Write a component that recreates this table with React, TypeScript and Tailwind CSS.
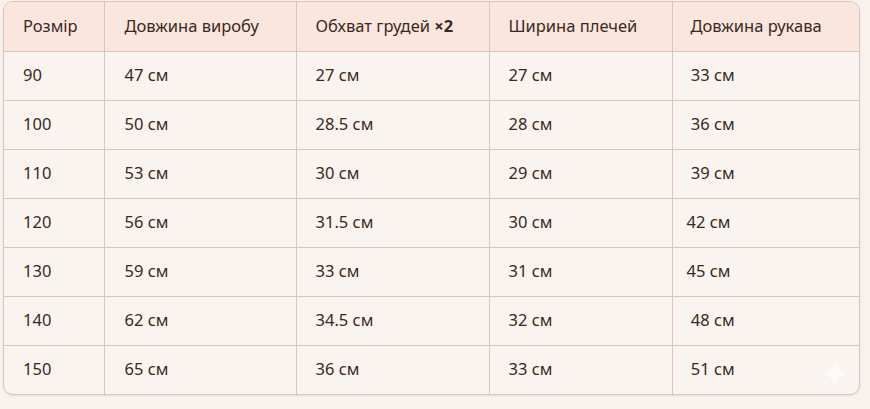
import React from 'react';

const NB = '\u00a0';

const rows: string[][] = [
  ['90', '47 см', '27 см', '27 см', NB + '33 см'],
  ['100', '50 см', '28.5 см', '28 см', NB + '36 см'],
  ['110', '53 см', '30 см', '29 см', NB + '39 см'],
  ['120', '56 см', '31.5 см', '30 см', '42 см'],
  ['130', '59 см', '33 см', '31 см', '45 см'],
  ['140', '62 см', '34.5 см', '32 см', NB + '48 см'],
  ['150', '65 см', '36 см', '33 см', NB + '51 см'],
];

const Sparkle: React.FC = () => (
  <svg className="absolute right-[11px] bottom-[7px]" width="26" height="26" viewBox="0 0 24 24">
    <path
      d="M12 0C12.6 6.4 17.6 11.4 24 12C17.6 12.6 12.6 17.6 12 24C11.4 17.6 6.4 12.6 0 12C6.4 11.4 11.4 6.4 12 0Z"
      fill="#ffffff"
      fillOpacity="0.6"
    />
  </svg>
);

export default function App() {
  return (
    <div
      className="w-[870px] h-[409px] bg-[#f8f1ed] pt-px pl-[3px] text-[#3a2921]"
      style={{ fontFamily: '"Noto Sans", "Open Sans", sans-serif' }}
    >
      <div className="relative w-[857px] rounded-[10px] border border-[#dcc4ba] overflow-hidden bg-[#f9f4f0] shadow-[0_1px_2px_rgba(120,80,60,0.12)]">
        <table className="w-full table-fixed border-collapse text-[16.5px]">
          <colgroup>
            <col className="w-[100px]" />
            <col className="w-[192px]" />
            <col className="w-[193px]" />
            <col className="w-[183px]" />
            <col />
          </colgroup>
          <thead>
            <tr className="bg-[#fbe6dd]">
              <th className="h-[49px] pl-[19px] pt-px text-left font-normal border-r border-b border-[#dcc4ba]">Розмір</th>
              <th className="h-[49px] pl-[20px] pt-px text-left font-normal border-r border-b border-[#dcc4ba]">Довжина виробу</th>
              <th className="h-[49px] pl-[19px] pt-px text-left font-normal border-r border-b border-[#dcc4ba]">
                Обхват грудей <span className="font-bold">×2</span>
              </th>
              <th className="h-[49px] pl-[19px] pt-px text-left font-normal border-r border-b border-[#dcc4ba]">Ширина плечей</th>
              <th className="h-[49px] pl-[18px] pt-px text-left font-normal border-b border-[#dcc4ba]">Довжина рукава</th>
            </tr>
          </thead>
          <tbody>
            {rows.map((r, i) => (
              <tr key={r[0]}>
                {r.map((c, j) => (
                  <td
                    key={j}
                    className={`h-[49px] ${j === 0 ? 'pl-[19px]' : j === 1 ? 'pl-[20px]' : j === 4 ? 'pl-[14px]' : 'pl-[19px]'} ${j < 4 ? 'border-r' : ''} ${i < rows.length - 1 ? 'border-b' : ''} border-[#dcc4ba]`}
                  >
                    {c}
                  </td>
                ))}
              </tr>
            ))}
          </tbody>
        </table>
        <Sparkle />
      </div>
    </div>
  );
}
